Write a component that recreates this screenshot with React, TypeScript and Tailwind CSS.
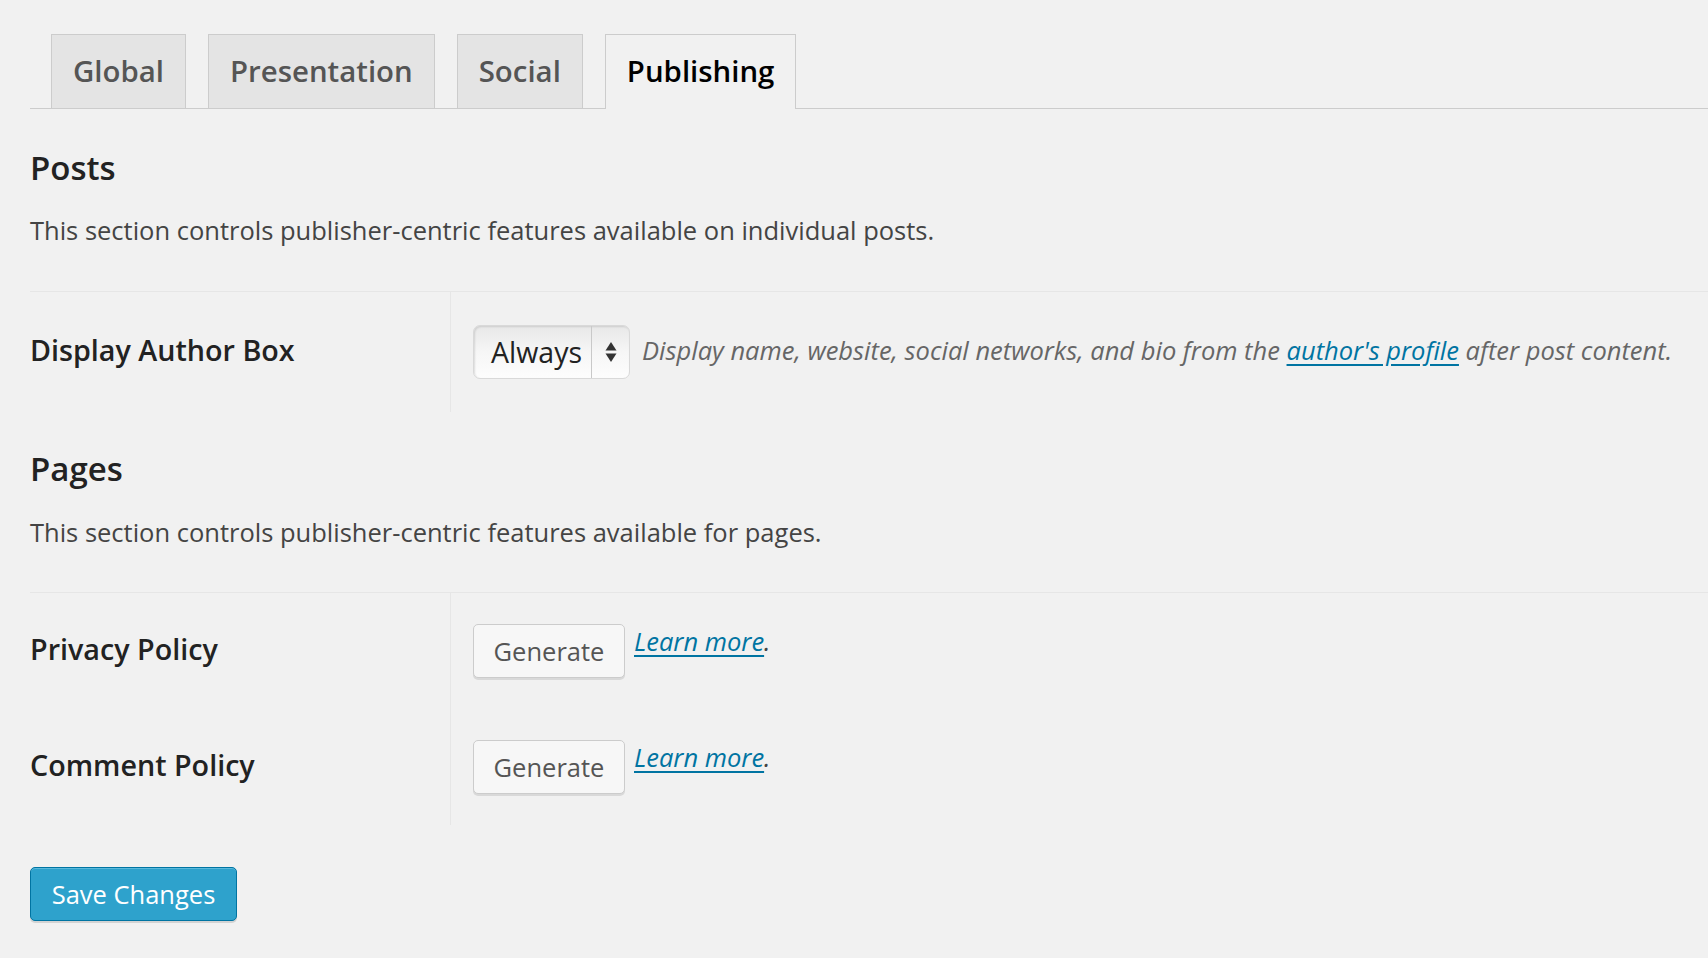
import React from "react"

const tabs = ["Global", "Presentation", "Social", "Publishing"]

function SelectArrows() {
  return (
    <svg width="12" height="22" viewBox="0 0 12 22">
      <path d="M6 1 L11.5 9.5 H0.5 Z" fill="#333" />
      <path d="M6 21 L11.5 12.5 H0.5 Z" fill="#333" />
    </svg>
  )
}

function GenerateButton() {
  return (
    <button
      type="button"
      className="flex h-[54px] w-[152px] items-center justify-center rounded-[5px] border border-[#cccccc] bg-[#f7f7f7] text-[25.5px] text-[#555555] shadow-[0_2px_0_#d9d9d9]"
    >
      Generate
    </button>
  )
}

function LearnMore() {
  return (
    <span className="-mt-[1px] ml-[9px] text-[25.5px] italic leading-[36px] text-[#444]">
      <a href="#" className="text-[#0074a2] underline underline-offset-[4px]">
        Learn more
      </a>
      .
    </span>
  )
}

interface IRowProps {
  label: string
  height: string
  children: React.ReactNode
}

function Row({ label, height, children }: IRowProps) {
  return (
    <div className={`flex ${height}`}>
      <div className="flex w-[421px] shrink-0 items-center border-r border-[#e6e6e6] pb-[4px]">
        <span className="text-[28.7px] font-semibold leading-[36px] text-[#222]">
          {label}
        </span>
      </div>
      <div className="flex flex-1 items-center pl-[22px]">{children}</div>
    </div>
  )
}

export default function App() {
  return (
    <div className="min-h-screen bg-[#f1f1f1] pt-[34px] pl-[30px] font-['Open_Sans',sans-serif]">
      {/* tabs */}
      <div className="flex items-end gap-[22px] border-b border-[#cccccc] pl-[21px]">
        {tabs.map((tab) => {
          const isActive = tab === "Publishing"
          return (
            <div
              key={tab}
              className={
                isActive
                  ? "-mb-px flex h-[75px] items-start border border-b-0 border-[#cccccc] bg-[#f1f1f1] px-[21px] pt-[16px] text-[29.4px] leading-[40px] font-semibold text-[#000]"
                  : "flex h-[74px] items-start border border-b-0 border-[#cccccc] bg-[#e4e4e4] px-[21px] pt-[16px] text-[29.4px] leading-[40px] font-semibold text-[#555555]"
              }
            >
              {tab}
            </div>
          )
        })}
      </div>

      {/* posts */}
      <h2 className="mt-[39px] text-[33px] leading-[40px] font-semibold text-[#222]">
        Posts
      </h2>
      <p className="mt-[24px] text-[25.5px] leading-[36px] text-[#444]">
        This section controls publisher-centric features available on
        individual posts.
      </p>
      <div className="mt-[43px] border-t border-[#e6e6e6]">
        <Row label="Display Author Box" height="h-[120px]">
          <div className="flex h-[54px] w-[157px] items-center rounded-[7px] border border-[#d9d9d9] bg-gradient-to-b from-[#e8e8e8] via-[#f6f6f6] to-[#fdfdfd] shadow-[inset_1px_1px_2px_rgba(0,0,0,0.12)]">
            <span className="pl-[17px] text-[28.5px] leading-[36px] text-[#222]">
              Always
            </span>
            <div className="ml-[9px] h-full w-px bg-[#c9c9c9]" />
            <div className="flex flex-1 items-center justify-center">
              <SelectArrows />
            </div>
          </div>
          <p className="ml-[12px] pb-[4px] text-[25.5px] leading-[36px] italic text-[#666]">
            Display name, website, social networks, and bio from the{" "}
            <a href="#" className="text-[#0074a2] underline underline-offset-[4px]">
              author's profile
            </a>{" "}
            after post content.
          </p>
        </Row>
      </div>

      {/* pages */}
      <h2 className="mt-[37px] text-[33px] leading-[40px] font-semibold text-[#222]">
        Pages
      </h2>
      <p className="mt-[25px] text-[25.5px] leading-[36px] text-[#444]">
        This section controls publisher-centric features available for pages.
      </p>
      <div className="mt-[42px] border-t border-[#e6e6e6]">
        <Row label="Privacy Policy" height="h-[116px]">
          <div className="flex items-start">
            <GenerateButton />
            <LearnMore />
          </div>
        </Row>
        <Row label="Comment Policy" height="h-[116px]">
          <div className="flex items-start">
            <GenerateButton />
            <LearnMore />
          </div>
        </Row>
      </div>

      <button
        type="button"
        className="mt-[42px] flex h-[54px] w-[207px] items-center justify-center rounded-[5px] border border-[#0074a2] bg-[#2ea2cc] text-[25.5px] text-white shadow-[inset_0_1px_0_rgba(120,200,230,0.6),0_2px_0_rgba(0,0,0,0.12)]"
      >
        Save Changes
      </button>
    </div>
  )
}
